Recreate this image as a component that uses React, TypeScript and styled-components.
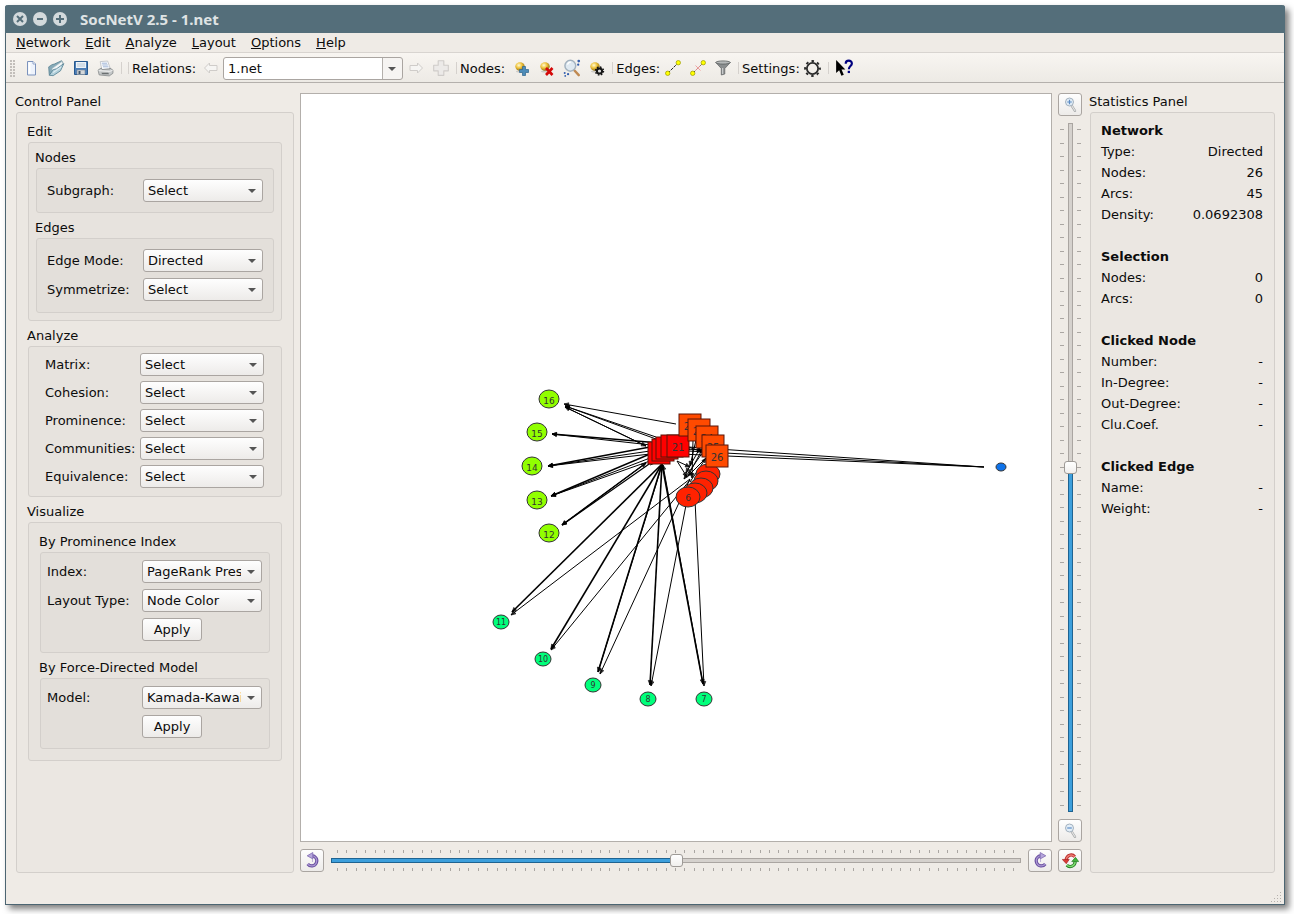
import React, { useState } from "react";
import styled, { createGlobalStyle, css } from "styled-components";

const Global = createGlobalStyle`
  * { box-sizing: border-box; }
  body {
    margin: 0;
    background: #fff;
    color: #0c0c0c;
    font: 13px/17px "DejaVu Sans", sans-serif;
  }
  button, select, input { font: inherit; color: inherit; margin: 0; }
`;

const Desktop = styled.div`
  display: flex;
  min-height: 100vh;
  padding: 5px 9px 9px 5px;
`;

const Window = styled.div`
  display: flex;
  flex: 1;
  flex-direction: column;
  min-width: 0;
  border: 1px solid #4c6572;
  border-top: 0;
  border-radius: 3px 3px 0 0;
  background: #efebe6;
  box-shadow: 4px 4px 6px rgba(0, 0, 0, 0.5);
`;

const TitleBar = styled.header`
  display: flex;
  align-items: center;
  gap: 6px;
  height: 28px;
  margin: 0 -1px;
  padding-left: 8px;
  border-radius: 3px 3px 0 0;
  background: #546e7a;
`;

const WindowButton = styled.button`
  display: flex;
  width: 14px;
  height: 14px;
  padding: 0;
  border: 0;
  background: none;
`;

const WindowTitle = styled.h1`
  margin: 0 0 0 7px;
  color: #dfe3e4;
  font: bold 15px/20px "Noto Sans", sans-serif;
`;

const MenuBar = styled.nav`
  display: flex;
  height: 20px;
  padding-left: 3px;
  border-bottom: 1px solid #d8d4d0;
`;

const MenuItem = styled.button`
  padding: 0 8px 0 7px;
  border: 0;
  background: none;
  line-height: 18px;
  &::first-letter { text-decoration: underline; }
`;

const ToolBar = styled.div`
  display: flex;
  align-items: center;
  height: 30px;
  padding-top: 1px;
  border-bottom: 1px solid #b4b0ac;
  background: linear-gradient(#f8f5f1, #edeae5);
`;

const Grip = styled.span`
  width: 6px;
  height: 17px;
  margin: 0 2px 0 4px;
  background: radial-gradient(circle at 1px 1px, #c2beba 0 1px, transparent 1px) 0 0 / 3px 3px;
`;

const Separator = styled.span`
  width: 1px;
  height: 12px;
  margin: 0 3px;
  background: #d5d1cd;
`;

const ToolButton = styled.button`
  display: flex;
  align-items: center;
  justify-content: center;
  width: 25px;
  height: 24px;
  padding: 0;
  border: 0;
  background: none;
`;

const ToolLabel = styled.span<{ $gap?: number }>`
  padding-right: ${(p) => p.$gap ?? 0}px;
  white-space: nowrap;
`;

const face = css`
  border: 1px solid #aaa5a1;
  border-radius: 3px;
  background: linear-gradient(#fefefe, #edebe9);
`;

const SelectBox = styled.span<{ $editable?: boolean }>`
  position: relative;
  display: block;
  min-width: 0;
  ${(p) => p.$editable && "width: 180px;"}

  select {
    display: block;
    width: 100%;
    height: 23px;
    padding: 0 20px 0 4px;
    appearance: none;
    ${face}
    ${(p) => p.$editable && "background: linear-gradient(90deg, #fff calc(100% - 20px), #b4b0ac calc(100% - 20px) calc(100% - 19px), #f6f4f2 calc(100% - 19px));"}
  }

  &::after {
    content: "";
    position: absolute;
    top: 10px;
    right: 7px;
    border: 4px solid transparent;
    border-top-color: #555;
    border-bottom: 0;
    pointer-events: none;
  }
`;

const Main = styled.main`
  display: grid;
  flex: 1;
  grid-template-columns: 278px minmax(0, 1fr) 185px;
  padding: 10px 9px 0 10px;
`;

const Panel = styled.section`
  display: flex;
  flex-direction: column;
`;

const Heading = styled.h2`
  margin: 0 0 2px -1px;
  font: inherit;
`;

const Frame = styled.div<{ $pad: string; $grow?: boolean }>`
  padding: ${(p) => p.$pad};
  border: 1px solid #d3cfcb;
  border-radius: 3px;
  background: rgba(70, 60, 40, 0.02);
  ${(p) => p.$grow && "flex: 1;"}
`;

const Group = styled.section`
  & + & { margin-top: 6px; }
`;

const Form = styled.div<{ $gap?: number; $label?: number }>`
  display: grid;
  grid-template-columns: ${(p) => p.$label ?? 95}px minmax(0, 1fr);
  align-items: center;
  row-gap: ${(p) => p.$gap ?? 6}px;
`;

const PushButton = styled.button`
  grid-column: 2;
  justify-self: start;
  width: 60px;
  height: 23px;
  padding: 0;
  ${face}
`;

const Stage = styled.section`
  display: grid;
  grid-template-columns: minmax(0, 1fr) 24px;
  grid-template-rows: minmax(0, 1fr) 24px;
  gap: 7px 6px;
  margin: 0 8px 0 6px;
`;

const Canvas = styled.div`
  contain: size;
  min-height: 400px;
  border: 1px solid #b3afab;
  background: #fff;
  overflow: hidden;

  svg { display: block; width: 100%; height: 100%; }
`;

const IconButton = styled.button`
  display: flex;
  align-items: center;
  justify-content: center;
  flex: none;
  width: 24px;
  height: 23px;
  padding: 0;
  ${face}
`;

const ZoomColumn = styled.div`
  display: flex;
  flex-direction: column;
  gap: 7px;
`;

const RotateRow = styled.div`
  display: flex;
  gap: 7px;
`;

const SliderBox = styled.div<{ $vertical?: boolean }>`
  display: flex;
  flex: 1;
  min-width: 0;
  min-height: 0;
  flex-direction: ${(p) => (p.$vertical ? "row" : "column")};
  justify-content: space-between;
  padding: ${(p) => (p.$vertical ? "0 1px 0 2px" : "1px 0")};
  ${(p) => (p.$vertical ? "contain: size;" : "height: 23px;")}
`;

const Ticks = styled.span<{ $vertical?: boolean }>`
  display: flex;
  justify-content: space-between;
  flex-direction: ${(p) => (p.$vertical ? "column" : "row")};
  padding: ${(p) => (p.$vertical ? "6px 0" : "0 6px")};

  i {
    width: ${(p) => (p.$vertical ? 4 : 1)}px;
    height: ${(p) => (p.$vertical ? 1 : 3)}px;
    background: #aaa6a2;
  }
`;

const Range = styled.input<{ $vertical?: boolean }>`
  appearance: none;
  display: block;
  flex: none;
  background: none;
  ${(p) =>
    p.$vertical
      ? "writing-mode: vertical-lr; direction: rtl; width: 13px; height: 100%;"
      : "width: 100%; height: 13px;"}

  &::-webkit-slider-runnable-track {
    ${(p) => (p.$vertical ? "width: 5px; height: 100%;" : "height: 5px;")}
    border: 1px solid #aaa5a1;
    background: linear-gradient(${(p) => (p.$vertical ? "0deg" : "90deg")}, #3d9fdc 50%, #d5d1cd 50%);
    ${(p) => `border-image: linear-gradient(${p.$vertical ? "0deg" : "90deg"}, #1f6391 50%, #aaa5a1 50%) 1;`}
  }

  &::-webkit-slider-thumb {
    appearance: none;
    width: 13px;
    height: 13px;
    ${(p) => (p.$vertical ? "margin-left: -5px;" : "margin-top: -5px;")}
    border: 1px solid #9e9a96;
    border-radius: 3px;
    background: linear-gradient(#fff, #f1efed);
  }
`;

const StatTable = styled.table`
  width: 100%;
  border-collapse: collapse;
  line-height: 21px;
  & + & { margin-top: 21px; }
  caption { text-align: left; font-weight: bold; }
  th { padding: 0; text-align: left; font-weight: normal; }
  td { padding: 0; text-align: right; }
`;

const StatusBar = styled.footer`
  display: flex;
  align-items: flex-end;
  justify-content: flex-end;
  height: 31px;
  padding: 0 2px 1px 0;
`;

/* ---------- icons ---------- */

const Svg = ({ size = 18, children }: { size?: number; children: React.ReactNode }) => (
  <svg width={size} height={size} viewBox="0 0 16 16" aria-hidden="true">
    {children}
  </svg>
);

const WinIcon = ({ d }: { d: string }) => (
  <svg width="14" height="14" viewBox="0 0 14 14" aria-hidden="true">
    <circle cx="7" cy="7" r="7" fill="#d3d9dc" />
    <path d={d} stroke="#546e7a" strokeWidth="2" />
  </svg>
);

const NewIcon = () => (
  <Svg size={16}>
    <path d="M4.500 1.500h5.500l2.500 2.500v11h-8z" fill="#eef3fc" stroke="#7c93bd" />
    <path d="M10 1.500v2.500h2.500" fill="#fff" stroke="#7c93bd" strokeWidth=".8" />
    <path d="M5.500 2.500h2v11h-2z" fill="#fff" />
  </Svg>
);

const OpenIcon = () => (
  <Svg>
    <path d="M1.500 7l3-2 2-.5L13 1.500l1 1.500-8 9-4 2z" fill="#86aab8" stroke="#557f90" strokeWidth=".7" />
    <path d="M4.500 8.500L13.500 2l.5 4-9 7z" fill="#f3f6f7" stroke="#a9bac1" strokeWidth=".6" />
    <path d="M2 14.500L5.500 9.500l3-.8L15 4l-3 6.500-6.500 4.300z" fill="#b3d0db" stroke="#4f7d90" strokeWidth=".7" />
    <path d="M5.500 12l7-5" stroke="#e0eef3" strokeWidth="1" />
  </Svg>
);

const SaveIcon = () => (
  <Svg size={16}>
    <path d="M1.500 1.500h13v13h-13z" fill="#4c7eb8" stroke="#28598f" />
    <path d="M3 2h10v6H3z" fill="#eef3f7" />
    <path d="M4 4h8M4 6h8" stroke="#a9bdd0" strokeWidth=".8" />
    <path d="M4 10h8v4.500H4z" fill="#d5d8da" stroke="#7a8894" strokeWidth=".6" />
    <path d="M5.500 11h2v3h-2z" fill="#41556b" />
  </Svg>
);

const PrintIcon = () => (
  <Svg size={17}>
    <path d="M3 1.500l7-.5 2.500 7-8 1z" fill="#fafbfc" stroke="#b5b9c0" strokeWidth=".7" />
    <path d="M4.500 3h5M5 4.700h5.200M5.600 6.400h5.200" stroke="#8fa9d1" strokeWidth=".8" />
    <path d="M1 9.500L4 7.500l.8 1.500 7.200-.5V7.500l3 2v3l-3.500 2.500L2 14z" fill="#c6c9ca" stroke="#808485" strokeWidth=".7" />
    <path d="M1.500 10l10.500.7 2.700-1" stroke="#f3f3f3" strokeWidth=".9" fill="none" />
    <path d="M4 12h6.500l1 1.500H5z" fill="#6b6f71" />
  </Svg>
);

const ArrowIcon = ({ left }: { left?: boolean }) => (
  <Svg size={16}>
    <path
      d={left ? "M1.500 8l5-5v2.500h7.500v5H6.500V13z" : "M14.500 8l-5-5v2.500H2v5h7.500V13z"}
      fill="#f6f5f3"
      stroke="#cfccc9"
      strokeLinejoin="round"
    />
  </Svg>
);

const PlusIcon = () => (
  <Svg>
    <path d="M5.500 1.500h5v4h4v5h-4v4h-5v-4h-4v-5h4z" fill="#eceae8" stroke="#cfccc9" strokeLinejoin="round" />
  </Svg>
);

const Ball = () => (
  <>
    <defs>
      <radialGradient id="ball" cx=".38" cy=".35" r=".65">
        <stop offset="0" stopColor="#fffbd8" />
        <stop offset=".5" stopColor="#f0c43c" />
        <stop offset="1" stopColor="#9a7416" />
      </radialGradient>
    </defs>
    <ellipse cx="6" cy="6.500" rx="4.700" ry="4.200" fill="url(#ball)" />
    <ellipse cx="6" cy="11.500" rx="4" ry="1" fill="#000" opacity=".15" />
  </>
);

const NodeAddIcon = () => (
  <Svg size={16}>
    <Ball />
    <path d="M8.500 6.500h3v3h3v3h-3v3h-3v-3h-3v-3h3z" fill="#4e8cb8" stroke="#2d648d" strokeWidth=".7" />
  </Svg>
);

const NodeRemoveIcon = () => (
  <Svg size={16}>
    <Ball />
    <path d="M7 8l6.500 7M13.500 8L7 15" stroke="#d40808" strokeWidth="2.600" />
  </Svg>
);

const NodeSettingsIcon = () => (
  <Svg size={16}>
    <Ball />
    <circle cx="10.500" cy="11" r="2.600" fill="#ddd" stroke="#151515" strokeWidth="2" />
    <circle cx="10.500" cy="11" r="4" fill="none" stroke="#151515" strokeWidth="1.400" strokeDasharray="1.600 1.540" />
  </Svg>
);

const Lens = ({ sign }: { sign: string }) => (
  <>
    <path d="M9.800 8.800l3.200 5" stroke="#a5a7a8" strokeWidth="2.400" strokeLinecap="round" />
    <path d="M9.800 8.800l3.200 5" stroke="#e6e6e6" strokeWidth="1.100" strokeLinecap="round" />
    <circle cx="7.500" cy="5" r="4" fill="#e2edf7" stroke="#a3b1be" strokeWidth="1" />
    <path d={sign} stroke="#5d8cc4" strokeWidth="1.200" />
  </>
);

const FindIcon = () => (
  <Svg size={18}>
    <path d="M10 10l4 4.300" stroke="#c08a52" strokeWidth="2.200" strokeLinecap="round" />
    <circle cx="6.500" cy="6" r="4.800" fill="#dfe9f1" stroke="#a3b2bf" strokeWidth="1.300" />
    <path d="M4 5a3 3 0 013-2.200" stroke="#fff" strokeWidth="1.200" fill="none" />
    <circle cx="14" cy="1.800" r="1.200" fill="#345fae" />
    <circle cx="13.500" cy="5" r="1" fill="#345fae" />
    <circle cx="1.500" cy="12.500" r=".9" fill="#345fae" />
    <circle cx="4.500" cy="13.500" r="1" fill="#345fae" />
    <circle cx="2" cy="15" r=".8" fill="#345fae" />
  </Svg>
);

const EdgeIcon = ({ remove }: { remove?: boolean }) => (
  <Svg size={16}>
    <path d="M3 13L13 3" stroke="#222" strokeWidth="1" strokeDasharray="3 1" />
    <circle cx="2.700" cy="13.300" r="2.200" fill="#ff0" stroke="#9a9a00" strokeWidth=".7" />
    <circle cx="13.300" cy="2.700" r="2.200" fill="#ff0" stroke="#9a9a00" strokeWidth=".7" />
    {remove && <path d="M5.500 5.500l5 5M10.500 5.500l-5 5" stroke="#e99" strokeWidth=".9" />}
  </Svg>
);

const FilterIcon = () => (
  <Svg size={16}>
    <path d="M.8 2.500l5.500 6V15l3.500-1V8.500l5.500-6z" fill="#8a8d8e" stroke="#5f6263" strokeWidth=".7" />
    <ellipse cx="8" cy="2.500" rx="7.200" ry="1.600" fill="#b5b8b8" stroke="#5c5f60" strokeWidth=".8" />
    <path d="M7.700 8v6" stroke="#d8dada" strokeWidth="1" />
  </Svg>
);

const GearIcon = () => (
  <Svg size={17}>
    <circle cx="8" cy="8" r="5.300" fill="none" stroke="#2b2b2b" strokeWidth="1.700" />
    <circle cx="8" cy="8" r="7" fill="none" stroke="#2b2b2b" strokeWidth="1.800" strokeDasharray="2.400 3.098" strokeDashoffset="1.200" />
  </Svg>
);

const WhatsThisIcon = () => (
  <Svg size={18}>
    <path d="M1 .8v11.700l2.700-2.400 2 4.700 2.100-.9-2-4.600h3.400z" fill="#000" />
    <path d="M9.500 4.200c0-3.600 5.500-3.600 5.500-.2 0 2.200-2.700 2.300-2.700 5" fill="none" stroke="#00007f" strokeWidth="1.900" />
    <path d="M11.300 10.500h2v2h-2z" fill="#00007f" />
  </Svg>
);

const RotateIcon = ({ flip }: { flip?: boolean }) => (
  <Svg size={17}>
    <g transform={flip ? "translate(16 0) scale(-1 1)" : undefined}>
      <path d="M7 3.500a4.800 4.800 0 11-3.500 7.800" fill="none" stroke="#6a4fa0" strokeWidth="3" />
      <path d="M7 3.500a4.800 4.800 0 11-3.500 7.800" fill="none" stroke="#a896d2" strokeWidth="1.200" />
      <path d="M8.300.5v6L3 3.600z" fill="#b5a6dc" stroke="#7a64ad" strokeWidth=".7" />
      <path d="M8 6v4" stroke="#8d79bd" strokeWidth="1" strokeDasharray="1 1" />
    </g>
  </Svg>
);

const ResetIcon = () => (
  <Svg size={17}>
    <path d="M12 4.500C9.500 1.500 4.500 2.500 3.800 7.500" fill="none" stroke="#b52525" strokeWidth="3" />
    <path d="M12 4.500C9.500 1.500 4.500 2.500 3.800 7.500" fill="none" stroke="#ec7a72" strokeWidth="1.400" />
    <path d="M.3 7h6.500L4 11z" fill="#d93b36" stroke="#a11c1c" strokeWidth=".6" />
    <path d="M4.500 12.300c2.500 2.500 7.500 1.500 8-3.500" fill="none" stroke="#1f7d1f" strokeWidth="3" />
    <path d="M4.500 12.300c2.500 2.500 7.500 1.500 8-3.500" fill="none" stroke="#7fd873" strokeWidth="1.400" />
    <path d="M9.200 9h6.500l-3-4z" fill="#42b53b" stroke="#1b741b" strokeWidth=".6" />
  </Svg>
);

const SizeGrip = () => (
  <svg width="11" height="11" viewBox="0 0 11 11" fill="#b5b1ad" aria-hidden="true">
    {[0, 1, 2, 3].flatMap((r) =>
      Array.from({ length: r + 1 }, (_, c) => (
        <rect key={`${r}-${c}`} x={9 - c * 3} y={r * 3} width="1" height="1" />
      )),
    )}
  </svg>
);

/* ---------- network drawing ---------- */

type Line = [x1: number, y1: number, x2: number, y2: number, width?: number];

const EDGES: Line[] = [
  [676, 424, 564, 404],
  [656, 437, 565, 406],
  [656, 439, 565, 406],
  [646, 446, 565, 407],
  [565, 407, 646, 446],
  [660, 443, 552, 434, 1.4],
  [660, 446, 552, 434, 1.2],
  [650, 447, 548, 466, 1.5],
  [650, 451, 548, 466],
  [650, 454, 548, 466],
  [650, 454, 551, 496, 1.4],
  [650, 458, 551, 496],
  [650, 461, 551, 496],
  [646, 463, 562, 525, 1.5],
  [652, 462, 562, 525, 1.2],
  [562, 525, 646, 463],
  [662, 464, 512, 612, 1.6],
  [662, 464, 551, 649, 1.6],
  [662, 464, 598, 672, 1.6],
  [662, 464, 650, 685, 1.6],
  [662, 464, 703, 684, 1.6],
  [598, 672, 662, 465],
  [703, 684, 663, 465],
  [690, 479, 511, 615],
  [690, 480, 551, 650],
  [690, 479, 600, 674],
  [687, 500, 651, 686],
  [695, 500, 704, 686],
  [984, 467, 688, 447],
  [984, 467, 688, 451],
  [984, 467, 680, 454],
  [677, 461, 690, 467],
  [677, 461, 687, 477],
  [693, 440, 692, 478],
  [696, 440, 690, 466],
  [703, 452, 684, 479],
  [700, 448, 686, 473],
  [706, 458, 688, 476],
  [688, 476, 703, 448],
  [690, 482, 706, 458],
  [686, 449, 702, 450],
  [686, 446, 702, 452],
  [650, 465, 690, 449],
];

const Edge = ({ line }: { line: Line }) => {
  const [x1, y1, x2, y2, w = 1] = line;
  const angle = (Math.atan2(y2 - y1, x2 - x1) * 180) / Math.PI;
  return (
    <g stroke="#000">
      <line x1={x1} y1={y1} x2={x2} y2={y2} strokeWidth={w} />
      {x1 < 980 && (
        <path d="M-4.500-2L0 0l-4.500 2z" strokeWidth=".6" fillOpacity=".7" transform={`translate(${x2} ${y2}) rotate(${angle})`} />
      )}
    </g>
  );
};

type Vertex = { x: number; y: number; id: string; kind: "leaf" | "mint" | "blue" | "disc" | "red" | "orange" };

const VERTICES: Vertex[] = [
  { x: 549, y: 399, id: "16", kind: "leaf" },
  { x: 537, y: 432, id: "15", kind: "leaf" },
  { x: 532, y: 466, id: "14", kind: "leaf" },
  { x: 537, y: 500, id: "13", kind: "leaf" },
  { x: 549, y: 533, id: "12", kind: "leaf" },
  { x: 501, y: 622, id: "11", kind: "mint" },
  { x: 543, y: 659, id: "10", kind: "mint" },
  { x: 593, y: 685, id: "9", kind: "mint" },
  { x: 648, y: 699, id: "8", kind: "mint" },
  { x: 704, y: 699, id: "7", kind: "mint" },
  { x: 1001, y: 467, id: "", kind: "blue" },
  { x: 708, y: 474, id: "", kind: "disc" },
  { x: 706, y: 481, id: "", kind: "disc" },
  { x: 701, y: 488, id: "", kind: "disc" },
  { x: 695, y: 493, id: "", kind: "disc" },
  { x: 688, y: 497, id: "6", kind: "disc" },
  { x: 659, y: 453, id: "", kind: "red" },
  { x: 663, y: 450, id: "", kind: "red" },
  { x: 667, y: 448, id: "", kind: "red" },
  { x: 672, y: 446, id: "", kind: "red" },
  { x: 678, y: 446, id: "21", kind: "red" },
  { x: 690, y: 425, id: "22", kind: "orange" },
  { x: 699, y: 430, id: "23", kind: "orange" },
  { x: 707, y: 437, id: "24", kind: "orange" },
  { x: 713, y: 446, id: "25", kind: "orange" },
  { x: 717, y: 456, id: "26", kind: "orange" },
];

const LOOK = {
  leaf: { rx: 10, ry: 9, fill: "#91ff00", font: 9, drop: 5 },
  mint: { rx: 8, ry: 7, fill: "#00ff7b", font: 8, drop: 3 },
  blue: { rx: 5, ry: 4, fill: "#0f73ea", font: 8, drop: 3 },
  disc: { rx: 12, ry: 10, fill: "#ff2200", font: 9, drop: 4 },
  red: { rx: 11, ry: 11, fill: "#ff0000", font: 10, drop: 5 },
  orange: { rx: 11, ry: 11, fill: "#ff4a00", font: 10, drop: 5 },
};

const Node = ({ v }: { v: Vertex }) => {
  const { rx, ry, fill, font, drop } = LOOK[v.kind];
  const square = v.kind === "red" || v.kind === "orange";
  return (
    <g>
      {square ? (
        <rect x={v.x - rx} y={v.y - ry} width={rx * 2} height={ry * 2} fill={fill} stroke="#5a1408" />
      ) : (
        <ellipse cx={v.x} cy={v.y} rx={rx} ry={ry} fill={fill} stroke="#333" />
      )}
      {v.id && (
        <text x={v.x} y={v.y + drop} fontSize={font} textAnchor="middle" fill="#333">
          {v.id}
        </text>
      )}
    </g>
  );
};

const NetworkView = () => (
  <svg viewBox="301 94 750 747" role="img" aria-label="Network graph">
    {EDGES.map((line, i) => (
      <Edge key={i} line={line} />
    ))}
    {VERTICES.map((v, i) => (
      <Node key={i} v={v} />
    ))}
  </svg>
);

/* ---------- form parts ---------- */

const Combo = ({ id, label, value }: { id: string; label: string; value: string }) => (
  <>
    <label htmlFor={id}>{label}</label>
    <SelectBox>
      <select id={id}>
        <option>{value}</option>
      </select>
    </SelectBox>
  </>
);

const Slider = ({ label, count, vertical }: { label: string; count: number; vertical?: boolean }) => {
  const [value, setValue] = useState(50);
  const ticks = (
    <Ticks $vertical={vertical} aria-hidden="true">
      {Array.from({ length: count }, (_, i) => (
        <i key={i} />
      ))}
    </Ticks>
  );
  return (
    <SliderBox $vertical={vertical}>
      {ticks}
      <Range
        type="range"
        aria-label={label}
        $vertical={vertical}
        value={value}
        onChange={(e) => setValue(Number(e.target.value))}
      />
      {ticks}
    </SliderBox>
  );
};

const MENUS = ["Network", "Edit", "Analyze", "Layout", "Options", "Help"];

const STATS: [string, [string, string][]][] = [
  ["Network", [["Type:", "Directed"], ["Nodes:", "26"], ["Arcs:", "45"], ["Density:", "0.0692308"]]],
  ["Selection", [["Nodes:", "0"], ["Arcs:", "0"]]],
  ["Clicked Node", [["Number:", "-"], ["In-Degree:", "-"], ["Out-Degree:", "-"], ["Clu.Coef.", "-"]]],
  ["Clicked Edge", [["Name:", "-"], ["Weight:", "-"]]],
];

const tool = (label: string, icon: React.ReactNode) => (
  <ToolButton type="button" aria-label={label}>
    {icon}
  </ToolButton>
);

export default function App() {
  return (
    <Desktop>
      <Global />
      <Window>
        <TitleBar>
          <WindowButton aria-label="Close"><WinIcon d="M4 4l6 6M10 4l-6 6" /></WindowButton>
          <WindowButton aria-label="Minimize"><WinIcon d="M4 7h6" /></WindowButton>
          <WindowButton aria-label="Maximize"><WinIcon d="M3 7h8M7 3v8" /></WindowButton>
          <WindowTitle>SocNetV 2.5 - 1.net</WindowTitle>
        </TitleBar>

        <MenuBar>
          {MENUS.map((m) => (
            <MenuItem key={m} type="button">{m}</MenuItem>
          ))}
        </MenuBar>

        <ToolBar role="toolbar">
          <Grip />
          {tool("New", <NewIcon />)}
          {tool("Open", <OpenIcon />)}
          {tool("Save", <SaveIcon />)}
          {tool("Print", <PrintIcon />)}
          <Separator />
          <Separator />
          <ToolLabel as="label" htmlFor="relation" $gap={2}>Relations:</ToolLabel>
          {tool("Previous relation", <ArrowIcon left />)}
          <SelectBox $editable>
            <select id="relation"><option>1.net</option></select>
          </SelectBox>
          {tool("Next relation", <ArrowIcon />)}
          {tool("Add relation", <PlusIcon />)}
          <Separator />
          <ToolLabel $gap={4}>Nodes:</ToolLabel>
          {tool("Add node", <NodeAddIcon />)}
          {tool("Remove node", <NodeRemoveIcon />)}
          {tool("Find node", <FindIcon />)}
          {tool("Node properties", <NodeSettingsIcon />)}
          <Separator />
          <ToolLabel>Edges:</ToolLabel>
          {tool("Add edge", <EdgeIcon />)}
          {tool("Remove edge", <EdgeIcon remove />)}
          {tool("Filter edges", <FilterIcon />)}
          <Separator />
          <ToolLabel>Settings:</ToolLabel>
          {tool("Settings", <GearIcon />)}
          <Separator />
          {tool("What's this", <WhatsThisIcon />)}
        </ToolBar>

        <Main>
          <Panel>
            <Heading>Control Panel</Heading>
            <Frame $pad="10px 11px" $grow>
              <Group>
                <Heading>Edit</Heading>
                <Frame $pad="6px 7px 7px">
                  <Group>
                    <Heading>Nodes</Heading>
                    <Frame $pad="10px">
                      <Form $label={96}><Combo id="subgraph" label="Subgraph:" value="Select" /></Form>
                    </Frame>
                  </Group>
                  <Group>
                    <Heading>Edges</Heading>
                    <Frame $pad="10px 10px 11px">
                      <Form $label={96}>
                        <Combo id="edge-mode" label="Edge Mode:" value="Directed" />
                        <Combo id="symmetrize" label="Symmetrize:" value="Select" />
                      </Form>
                    </Frame>
                  </Group>
                </Frame>
              </Group>
              <Group>
                <Heading>Analyze</Heading>
                <Frame $pad="6px 17px 8px 16px">
                  <Form $gap={5}>
                    {["Matrix:", "Cohesion:", "Prominence:", "Communities:", "Equivalence:"].map((l) => (
                      <Combo key={l} id={l.slice(0, -1)} label={l} value="Select" />
                    ))}
                  </Form>
                </Frame>
              </Group>
              <Group>
                <Heading>Visualize</Heading>
                <Frame $pad="10px 11px 11px">
                  <Group>
                    <Heading>By Prominence Index</Heading>
                    <Frame $pad="7px 7px 11px 6px">
                      <Form>
                        <Combo id="index" label="Index:" value="PageRank Prestige" />
                        <Combo id="layout-type" label="Layout Type:" value="Node Color" />
                        <PushButton type="button">Apply</PushButton>
                      </Form>
                    </Frame>
                  </Group>
                  <Group>
                    <Heading>By Force-Directed Model</Heading>
                    <Frame $pad="7px 7px 10px 6px">
                      <Form>
                        <Combo id="model" label="Model:" value="Kamada-Kawai" />
                        <PushButton type="button">Apply</PushButton>
                      </Form>
                    </Frame>
                  </Group>
                </Frame>
              </Group>
            </Frame>
          </Panel>

          <Stage>
            <Canvas><NetworkView /></Canvas>
            <ZoomColumn>
              <IconButton aria-label="Zoom in">
                <Svg size={16}><Lens sign="M7.500 2.700v4.600M5.200 5h4.600" /></Svg>
              </IconButton>
              <Slider label="Zoom" count={51} vertical />
              <IconButton aria-label="Zoom out">
                <Svg size={16}><Lens sign="M5.200 5h4.600" /></Svg>
              </IconButton>
            </ZoomColumn>
            <RotateRow>
              <IconButton aria-label="Rotate left"><RotateIcon /></IconButton>
              <Slider label="Rotation" count={73} />
              <IconButton aria-label="Rotate right"><RotateIcon flip /></IconButton>
            </RotateRow>
            <IconButton aria-label="Reset"><ResetIcon /></IconButton>
          </Stage>

          <Panel>
            <Heading>Statistics Panel</Heading>
            <Frame $pad="7px 11px 7px 10px" $grow>
              {STATS.map(([title, rows]) => (
                <StatTable key={title}>
                  <caption>{title}</caption>
                  <tbody>
                    {rows.map(([k, v]) => (
                      <tr key={k}>
                        <th scope="row">{k}</th>
                        <td>{v}</td>
                      </tr>
                    ))}
                  </tbody>
                </StatTable>
              ))}
            </Frame>
          </Panel>
        </Main>

        <StatusBar><SizeGrip /></StatusBar>
      </Window>
    </Desktop>
  );
}
